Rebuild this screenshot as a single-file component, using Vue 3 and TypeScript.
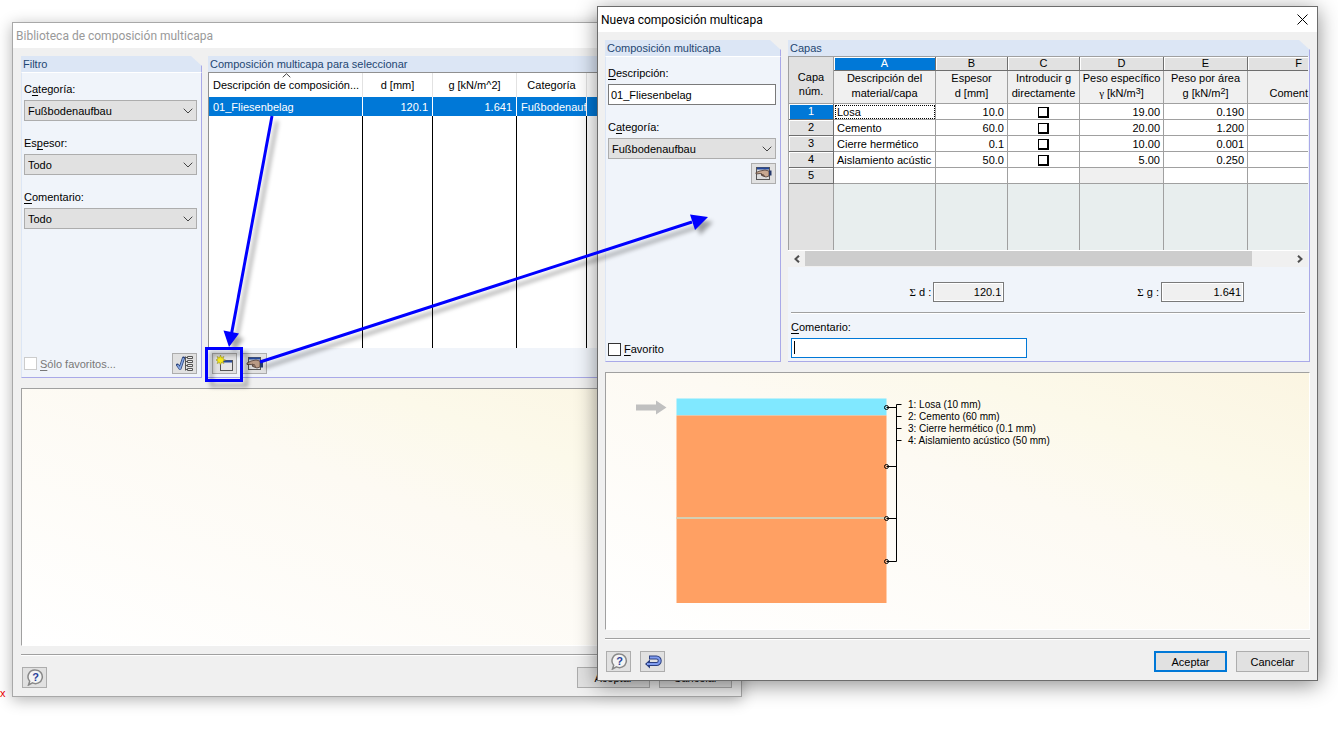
<script setup lang="ts">
import { ref } from 'vue'

interface Layer {
  name: string
  thickness: string
  direct: boolean
  weight: string
  area: string
}

const layers = ref<Layer[]>([
  { name: 'Losa', thickness: '10.0', direct: false, weight: '19.00', area: '0.190' },
  { name: 'Cemento', thickness: '60.0', direct: false, weight: '20.00', area: '1.200' },
  { name: 'Cierre hermético', thickness: '0.1', direct: false, weight: '10.00', area: '0.001' },
  { name: 'Aislamiento acústic', thickness: '50.0', direct: false, weight: '5.00', area: '0.250' },
])

const filters = [
  { id: 'f-cat', pre: 'C', key: 'a', post: 'tegoría:', value: 'Fußbodenaufbau' },
  { id: 'f-esp', pre: 'Es', key: 'p', post: 'esor:', value: 'Todo' },
  { id: 'f-com', pre: '', key: 'C', post: 'omentario:', value: 'Todo' },
]

const letters = ['A', 'B', 'C', 'D', 'E', 'F']
const legend = [
  '1: Losa (10 mm)',
  '2: Cemento (60 mm)',
  '3: Cierre hermético (0.1 mm)',
  '4: Aislamiento acústico (50 mm)',
]
const anchors = [35, 94, 146, 189]

const description = ref('01_Fliesenbelag')
const comment = ref('')
</script>

<template>
  <main class="desktop">
    <span class="stray">x</span>

    <section class="window library" aria-label="Biblioteca de composición multicapa">
      <header class="titlebar">Biblioteca de composición multicapa</header>
      <div class="content">
        <div class="panels">
          <section class="panel filter">
            <h2 class="panel-head cut">Filtro</h2>
            <div class="panel-body form">
              <div v-for="f in filters" :key="f.id" class="field">
                <label :for="f.id">{{ f.pre }}<u>{{ f.key }}</u>{{ f.post }}</label>
                <div class="combo">
                  <select :id="f.id"><option>{{ f.value }}</option></select>
                  <svg width="10" height="6" viewBox="0 0 10 6"><path d="M.7.7 5 5 9.3.7" /></svg>
                </div>
              </div>
              <div class="bottom">
                <label class="check off"><input type="checkbox" disabled /><span><u>S</u>ólo favoritos...</span></label>
                <button class="icon-btn" type="button" aria-label="Seleccionar filtro">
                  <svg width="18" height="17" viewBox="0 0 18 17">
                    <path d="M1.500 10 4 13.500 7.500 3" fill="none" stroke="#273f78" stroke-width="3" stroke-linejoin="round" stroke-linecap="round" />
                    <path d="M1.500 10 4 13.500 7.500 3" fill="none" stroke="#86a8e4" stroke-width="1.500" />
                    <path d="M9.500 1.500v14M9.500 2.500h3M9.500 6.500h3M9.500 10.500h3M9.500 14.500h3" fill="none" stroke="#555" />
                    <path d="M11.500 1.500h5v2h-5zM11.500 5.500h5v2h-5zM11.500 9.500h5v2h-5zM11.500 13.500h5v2h-5z" fill="#eee" stroke="#555" />
                  </svg>
                </button>
              </div>
            </div>
          </section>

          <section class="panel list">
            <h2 class="panel-head">Composición multicapa para seleccionar</h2>
            <div class="list-body">
              <table class="chooser">
                <colgroup><col class="w154" /><col class="w70" /><col class="w84" /><col class="w70" /><col /></colgroup>
                <thead>
                  <tr>
                    <th class="sorted">
                      Descripción de composición...
                      <svg class="sort" width="9" height="5" viewBox="0 0 9 5"><path d="M.7 4.300 4.500.7 8.300 4.300" /></svg>
                    </th>
                    <th>d [mm]</th><th>g [kN/m^2]</th><th>Categoría</th><th></th>
                  </tr>
                </thead>
                <tbody>
                  <tr class="picked">
                    <td>01_Fliesenbelag</td><td class="num">120.1</td><td class="num">1.641</td><td>Fußbodenauf</td><td></td>
                  </tr>
                  <tr class="blank"><td></td><td></td><td></td><td></td><td></td></tr>
                </tbody>
              </table>
              <div class="tools">
                <button class="icon-btn" type="button" aria-label="Nueva">
                  <svg width="18" height="17" viewBox="0 0 18 17">
                    <rect x="4.500" y="5.500" width="12" height="10" fill="#e6e6e6" stroke="#555" />
                    <path d="M5 6.500h11" stroke="#24489c" stroke-width="2" />
                    <path d="m4.500 0 1 2.600L8 1.500 7 4l2.500 1L7 6l1 2.500-2.500-1-1 2.500-1-2.500L1 8.500 2 6-.4 5 2 4 1 1.500l2.500 1.100z" fill="#f4e71c" stroke="#8b8424" stroke-width=".5" />
                  </svg>
                </button>
                <button class="icon-btn" type="button" aria-label="Editar">
                  <svg width="18" height="15" viewBox="0 0 18 15">
                    <rect x="2.500" y="1.500" width="12" height="12" fill="#dcdcdc" stroke="#555" />
                    <path d="M3 2.500h11" stroke="#24489c" stroke-width="2" />
                    <path d="M1 7 5 5l5-1 4 1v6l-3 1-3-1-2-1 1-1-2-.5L1 8.500z" fill="#b99a84" stroke="#4b3a32" stroke-width=".8" />
                    <path d="m6 8 3 1M7 9.800l3 .5" stroke="#4b3a32" stroke-width=".7" />
                    <path d="M14 4.500h3v7h-3z" fill="#25386a" />
                  </svg>
                </button>
              </div>
            </div>
          </section>
        </div>

        <div class="preview"></div>
        <hr class="rule" />
        <footer class="actions">
          <button class="icon-btn" type="button" aria-label="Ayuda">
            <svg width="18" height="17" viewBox="0 0 18 17">
              <path d="M9.500 1a6.800 6.800 0 1 1-3 12.900L2.500 16l1.200-3.800A6.800 6.800 0 0 1 9.500 1z" fill="#f4f4f4" stroke="#888" stroke-width="1.500" />
              <text x="9.500" y="12" class="q">?</text>
            </svg>
          </button>
          <span class="grow"></span>
          <button class="btn" type="button">Aceptar</button>
          <button class="btn" type="button">Cancelar</button>
        </footer>
      </div>
    </section>

    <section class="window editor" role="dialog" aria-label="Nueva composición multicapa">
      <header class="titlebar">
        Nueva composición multicapa
        <button class="close" type="button" aria-label="Cerrar">
          <svg width="11" height="11" viewBox="0 0 11 11"><path d="m.5.5 10 10m0-10-10 10" /></svg>
        </button>
      </header>
      <div class="content">
        <div class="panels">
          <section class="panel detail">
            <h2 class="panel-head cut">Composición multicapa</h2>
            <div class="panel-body form">
              <div class="field">
                <label for="d-desc"><u>D</u>escripción:</label>
                <input id="d-desc" v-model="description" class="text" type="text" />
              </div>
              <div class="field">
                <label for="d-cat">C<u>a</u>tegoría:</label>
                <div class="combo">
                  <select id="d-cat"><option>Fußbodenaufbau</option></select>
                  <svg width="10" height="6" viewBox="0 0 10 6"><path d="M.7.7 5 5 9.3.7" /></svg>
                </div>
                <button class="icon-btn under" type="button" aria-label="Editar categorías">
                  <svg width="18" height="15" viewBox="0 0 18 15">
                    <rect x="1.500" y="1.500" width="13" height="12" fill="#dcdcdc" stroke="#555" />
                    <path d="M2 2.500h12" stroke="#24489c" stroke-width="2" />
                    <path d="M1 6.500 5 5l5-1 4 1v5l-3 1-3-1-2-1 1-1-2-.5L1 8z" fill="#c8a890" stroke="#4b3a32" stroke-width=".8" />
                    <path d="m6 8 3 1M7 9.500l3 .5" stroke="#4b3a32" stroke-width=".7" />
                    <path d="M14 4.500h2.500v5H14z" fill="#25386a" />
                  </svg>
                </button>
              </div>
              <div class="bottom low">
                <label class="check"><input type="checkbox" /><span><u>F</u>avorito</span></label>
              </div>
            </div>
          </section>

          <section class="panel layers">
            <h2 class="panel-head cut">Capas</h2>
            <div class="layers-body">
              <div class="grid-clip">
                <table class="sheet">
                  <colgroup>
                    <col class="w45" /><col class="w102" /><col class="w72" /><col class="w72" /><col class="w84" /><col class="w84" /><col />
                  </colgroup>
                  <thead>
                    <tr class="letters">
                      <th class="corner" rowspan="2">Capa<br />núm.</th>
                      <th v-for="l in letters" :key="l" :class="{ active: l === 'A', last: l === 'F' }">{{ l }}</th>
                    </tr>
                    <tr class="names">
                      <th>Descripción del<br />material/capa</th>
                      <th>Espesor<br />d [mm]</th>
                      <th>Introducir g<br />directamente</th>
                      <th>Peso específico<br /><span class="sym">γ</span> [kN/m<sup>3</sup>]</th>
                      <th>Peso por área<br />g [kN/m<sup>2</sup>]</th>
                      <th class="last"><br />Coment</th>
                    </tr>
                  </thead>
                  <tbody>
                    <tr v-for="(row, i) in layers" :key="row.name">
                      <th :class="{ active: i === 0 }">{{ i + 1 }}</th>
                      <td :class="{ cursor: i === 0 }">{{ row.name }}</td>
                      <td class="num">{{ row.thickness }}</td>
                      <td class="mid"><input v-model="row.direct" type="checkbox" :aria-label="`Introducir g directamente, capa ${i + 1}`" /></td>
                      <td class="num">{{ row.weight }}</td>
                      <td class="num">{{ row.area }}</td>
                      <td></td>
                    </tr>
                    <tr><th>5</th><td></td><td></td><td></td><td class="locked"></td><td></td><td></td></tr>
                    <tr class="void"><th></th><td></td><td></td><td></td><td></td><td></td><td></td></tr>
                  </tbody>
                </table>
              </div>
              <div class="scroll">
                <button type="button" aria-label="Desplazar a la izquierda"><svg width="6" height="8" viewBox="0 0 6 8"><path d="M5 .7 1.500 4 5 7.300" /></svg></button>
                <div class="track"><div class="thumb"></div></div>
                <button type="button" aria-label="Desplazar a la derecha"><svg width="6" height="8" viewBox="0 0 6 8"><path d="M1 .7 4.500 4 1 7.300" /></svg></button>
              </div>
              <div class="sums">
                <div class="sum"><label for="sum-d"><span class="sym">Σ</span> d :</label><input id="sum-d" class="sum-d" readonly value="120.1" /></div>
                <div class="sum"><label for="sum-g"><span class="sym">Σ</span> g :</label><input id="sum-g" class="sum-g" readonly value="1.641" /></div>
              </div>
              <hr class="rule inner" />
              <div class="field note">
                <label for="note"><u>C</u>omentario:</label>
                <div class="note-box">
                  <input id="note" v-model="comment" class="text focus" type="text" />
                  <span class="caret"></span>
                </div>
              </div>
            </div>
          </section>
        </div>

        <div class="preview">
          <svg class="section-view" width="460" height="240" viewBox="0 0 460 240">
            <path d="M30 31.500h20v-4L60.500 34.500 50 41.500v-4H30z" fill="#c0c0c0" />
            <rect x="70.500" y="25.500" width="210" height="17" fill="#80e8ff" />
            <rect x="70.500" y="42.500" width="210" height="187.500" fill="#ffa063" />
            <rect x="70.500" y="144" width="210" height="2" fill="#d3cfb4" />
            <g fill="none" stroke="#000">
              <path v-for="a in anchors" :key="a" :d="`M280.500 ${a - 0.5}h10`" />
              <circle v-for="a in anchors" :key="a" cx="280.500" :cy="a - 0.5" r="2" />
              <path d="M295.500 31.500h-5v157M290.500 43.500h5M290.500 55.500h5M290.500 67.500h5" />
            </g>
            <text v-for="(t, i) in legend" :key="t" x="302" :y="35 + i * 12">{{ t }}</text>
          </svg>
        </div>
        <hr class="rule" />
        <footer class="actions">
          <button class="icon-btn" type="button" aria-label="Ayuda">
            <svg width="18" height="17" viewBox="0 0 18 17">
              <path d="M9.500 1a6.800 6.800 0 1 1-3 12.900L2.500 16l1.200-3.800A6.800 6.800 0 0 1 9.500 1z" fill="#f4f4f4" stroke="#888" stroke-width="1.500" />
              <text x="9.500" y="12" class="q">?</text>
            </svg>
          </button>
          <button class="icon-btn" type="button" aria-label="Restablecer">
            <svg width="18" height="15" viewBox="0 0 18 15">
              <path d="M5 3.500h7.500a3 3 0 0 1 0 6.500H4" fill="none" stroke="#2b3f80" stroke-width="4" />
              <path d="m6 5.500-5 4.500 5 4.500z" fill="#2b3f80" />
              <path d="M6 3.500h6.500a3 3 0 0 1 0 6.500H3" fill="none" stroke="#7f9cf0" stroke-width="2" />
            </svg>
          </button>
          <span class="grow"></span>
          <button class="btn primary" type="button">Aceptar</button>
          <button class="btn" type="button">Cancelar</button>
        </footer>
      </div>
    </section>

    <svg class="callouts" width="760" height="420" viewBox="0 0 760 420" aria-hidden="true">
      <g fill="none" stroke="#00f" stroke-width="3">
        <path d="M272 116 231.500 334" />
        <path d="M260 362 692 222" />
        <rect x="206.500" y="348.500" width="35" height="32" />
      </g>
      <path d="m229 347-5.500-16.500 15.500 3zM708 217l-18-2.500 5 15.500z" fill="#00f" />
    </svg>
  </main>
</template>

<style>
body {
  margin: 0;
  background: #fff;
}
</style>

<style scoped>
.desktop {
  position: relative;
  min-height: 100vh;
  overflow: hidden;
  font: 11px/14px "Liberation Sans", Arial, sans-serif;
  color: #000;
}
.desktop * {
  box-sizing: border-box;
}
button,
input,
select {
  font: inherit;
  color: inherit;
  margin: 0;
  padding: 0;
  border-radius: 0;
}
u {
  text-underline-offset: 2px;
}
.stray {
  position: absolute;
  left: 0;
  top: 686px;
  color: #e00;
}

/* windows */
.window {
  position: absolute;
  background: #f0f0f0;
}
.library {
  left: 12px;
  right: 596px;
  top: 22px;
  border: 1px solid #a8a8a8;
  box-shadow: 0 3px 14px rgba(0, 0, 0, 0.3);
}
.editor {
  left: 597px;
  right: 20px;
  top: 6px;
  border: 1px solid #6c6c6c;
  box-shadow: 0 4px 20px rgba(0, 0, 0, 0.45);
}
.titlebar {
  display: flex;
  align-items: center;
  justify-content: space-between;
  height: 25px;
  padding: 0 3px;
  background: #fff;
  font: 12px/16px Roboto, "Open Sans", sans-serif;
  white-space: nowrap;
}
.library .titlebar {
  color: #999;
}
.close {
  display: grid;
  place-items: center;
  width: 24px;
  height: 24px;
  border: 0;
  background: none;
}
.close path,
.combo path,
.sort path,
.scroll path {
  fill: none;
  stroke: #000;
}
.content {
  padding: 8px 8px;
}
.editor .content {
  padding: 8px 7px;
}
.panels {
  display: flex;
  gap: 6px;
}
.editor .panels {
  gap: 7px;
}

/* panels */
.panel {
  display: flex;
  flex-direction: column;
  min-height: 322px;
}
.filter {
  flex: 0 0 181px;
}
.detail {
  flex: 0 0 176px;
}
.list,
.layers {
  flex: 1 1 0;
  min-width: 0;
}
.panel-head {
  margin: 0;
  height: 16px;
  padding-left: 2px;
  background: #dce6f5;
  color: #1f4672;
  font-size: 11px;
  font-weight: normal;
  line-height: 16px;
}
.panel-head.cut {
  border-right: 1px solid #a9a9e8;
  clip-path: polygon(0 0, calc(100% - 11px) 0, 100% 10px, 100% 100%, 0 100%);
}
.panel-body {
  flex: 1;
  border: 1px solid #a9a9e8;
  border-left-color: #dce6f5;
  border-top-color: #fff;
  background: #f0f4fa;
}
.form {
  display: flex;
  flex-direction: column;
  gap: 15px;
  padding: 9px 4px 3px 2px;
}
.field {
  display: flex;
  flex-direction: column;
  gap: 4px;
}
.combo {
  display: grid;
  align-items: center;
}
.combo > * {
  grid-area: 1 / 1;
}
.combo svg {
  justify-self: end;
  margin-right: 4px;
  pointer-events: none;
}
.combo path,
.sort path {
  stroke: #444;
}
.combo select {
  appearance: none;
  width: 100%;
  height: 21px;
  padding: 0 4px 0 3px;
  border: 1px solid #adadad;
  background: #e1e1e1;
}
.text {
  width: 100%;
  height: 21px;
  padding: 0 2px;
  border: 1px solid #7a7a7a;
  background: #fff;
  outline: 0;
}
.bottom {
  display: flex;
  align-items: center;
  justify-content: space-between;
  margin-top: auto;
}
.bottom.low {
  padding-bottom: 2px;
}
.check {
  display: flex;
  align-items: center;
  gap: 3px;
}
.check input {
  appearance: none;
  width: 13px;
  height: 13px;
  border: 1px solid #333;
  background: #fff;
}
.check.off {
  color: #787878;
}
.check.off input {
  border-color: #ccc;
}
.icon-btn {
  display: grid;
  place-items: center;
  width: 25px;
  height: 21px;
  border: 1px solid #adadad;
  background: #e1e1e1;
}
.under {
  align-self: flex-end;
}
.q {
  fill: #2a3f9a;
  font: bold 11px "Liberation Sans", Arial, sans-serif;
  text-anchor: middle;
}

/* library list */
.list-body {
  flex: 1;
  display: flex;
  flex-direction: column;
  border-bottom: 1px solid #a9a9e8;
  background: #f0f4fa;
}
.chooser {
  width: 100%;
  table-layout: fixed;
  border-collapse: separate;
  border-spacing: 0;
  border: 1px solid #909090;
  border-bottom: 0;
  background: #fff;
}
.w154 { width: 154px; }
.w102 { width: 102px; }
.w84 { width: 84px; }
.w72 { width: 72px; }
.w70 { width: 70px; }
.w45 { width: 45px; }
.chooser th,
.chooser td {
  padding: 0 4px;
  overflow: hidden;
  white-space: nowrap;
  text-align: left;
  border-right: 1px solid #000;
}
.chooser th {
  position: relative;
  height: 24px;
  font-weight: normal;
  text-align: center;
  border-color: #e2e2e2;
}
.sort {
  position: absolute;
  left: calc(50% - 4px);
  top: 0;
}
.chooser .picked td {
  height: 19px;
  background: #0078d7;
  color: #fff;
  border-color: #fff;
}
.chooser .blank td {
  height: 232px;
}
.chooser .num,
.sheet .num {
  text-align: right;
}
.tools {
  display: flex;
  gap: 5px;
  padding: 5px 4px 3px;
}

/* layer sheet */
.layers-body {
  flex: 1;
  background: #f0f4fa;
  border: 1px solid #a9a9e8;
  border-top: 0;
  border-left: 0;
  padding-right: 1px;
}
.grid-clip {
  border-top: 1px solid #a0a0a0;
  border-left: 1px solid #a0a0a0;
}
.sheet {
  width: 100%;
  table-layout: fixed;
  border-collapse: separate;
  border-spacing: 0;
}
.sheet th,
.sheet td {
  height: 16px;
  padding: 0 3px;
  white-space: nowrap;
  font-weight: normal;
  line-height: 15px;
  border: 0 solid #a0a0a0;
  border-right-width: 1px;
  border-bottom-width: 1px;
  background: #fff;
}
.sheet td {
  padding-top: 2px;
  line-height: 13px;
}
.sheet tbody th,
.sheet .letters th {
  background: #e1e1e1;
  border-color: #6e6e6e;
  box-shadow: inset 1px 1px #fff;
}
.sheet .letters th {
  height: 14px;
  line-height: 13px;
}
.sheet .letters .corner {
  border-color: #a0a0a0;
  box-shadow: none;
  padding-top: 8px;
  line-height: 14px;
}
.sheet .letters .active,
.sheet tbody .active {
  background: #0078d7;
  color: #fff;
}
.sheet .names th {
  height: 33px;
  padding: 0;
  line-height: 15px;
  vertical-align: top;
  background: #f0f0f0;
}
.sheet tr > :last-child {
  border-right-width: 0;
}
.sheet .last {
  text-align: right;
}
.sheet .letters .last {
  padding-right: 6px;
}
.sheet sup {
  font-size: 9px;
  line-height: 0;
  vertical-align: 3px;
}
.sheet .cursor {
  outline: 1px dotted #000;
  outline-offset: -2px;
}
.sheet .mid {
  text-align: center;
  line-height: 0;
}
.sheet .mid input {
  appearance: none;
  width: 11px;
  height: 11px;
  border: 1px solid #000;
  border-right-width: 2px;
  border-bottom-width: 2px;
  background: #fff;
}
.sheet .locked {
  background: #f0f0f0;
}
.sheet .void td,
.sheet .void th {
  height: 66px;
  border-bottom: 0;
  background: #e8eeee;
}
.sheet .void th {
  background: #e1e1e1;
  border-color: #a0a0a0;
  box-shadow: none;
}
.sym {
  font-family: "Liberation Serif", "Times New Roman", serif;
}
.scroll {
  display: flex;
  height: 17px;
  border-top: 1px solid #fff;
  background: #f0f0f0;
}
.scroll button {
  display: grid;
  place-items: center;
  width: 17px;
  border: 0;
  background: none;
}
.scroll path {
  stroke: #505050;
  stroke-width: 2;
}
.track {
  flex: 1;
}
.thumb {
  width: 92%;
  height: 15px;
  background: #cdcdcd;
}
.sums {
  display: flex;
  justify-content: flex-end;
  gap: 133px;
  padding: 15px 64px 0 0;
}
.sum {
  display: flex;
  align-items: center;
  gap: 2px;
}
.sum input {
  height: 20px;
  padding: 0 2px;
  border: 1px solid #7a7a7a;
  background: #f0f0f0;
  box-shadow: inset 0 0 0 1px #fff;
  text-align: right;
  outline: 0;
}
.sum-d {
  width: 71px;
}
.sum-g {
  width: 83px;
}
.rule {
  height: 2px;
  margin: 8px 0 11px;
  border: 0;
  border-top: 1px solid #a0a0a0;
  border-bottom: 1px solid #fff;
}
.rule.inner {
  margin: 10px 3px 6px;
}
.note {
  padding: 0 3px;
}
.note-box {
  position: relative;
  width: 46%;
}
.text.focus {
  height: 20px;
  border-color: #0078d7;
}
.caret {
  position: absolute;
  left: 3px;
  top: 3px;
  width: 1px;
  height: 13px;
  background: #000;
}

/* preview */
.preview {
  min-height: 258px;
  margin-top: 10px;
  border: 1px solid #a0a0a0;
  border-right-color: #fff;
  border-bottom-color: #fff;
  background: linear-gradient(to top right, #fff, #fdfaf3 55%, #fcf9ea 75%, #fbf5e2);
}
.section-view {
  display: block;
}
.section-view text {
  font: 10px "Liberation Sans", Arial, sans-serif;
}
.actions {
  display: flex;
  align-items: center;
  gap: 9px;
  padding: 0 1px;
}
.grow {
  flex: 1;
}
.btn {
  width: 73px;
  height: 21px;
  border: 1px solid #adadad;
  background: #e1e1e1;
}
.btn.primary {
  border: 2px solid #0078d7;
}

.callouts {
  position: absolute;
  left: 0;
  top: 0;
  pointer-events: none;
  filter: drop-shadow(5px 5px 2px rgba(0, 0, 0, 0.35));
}
</style>
